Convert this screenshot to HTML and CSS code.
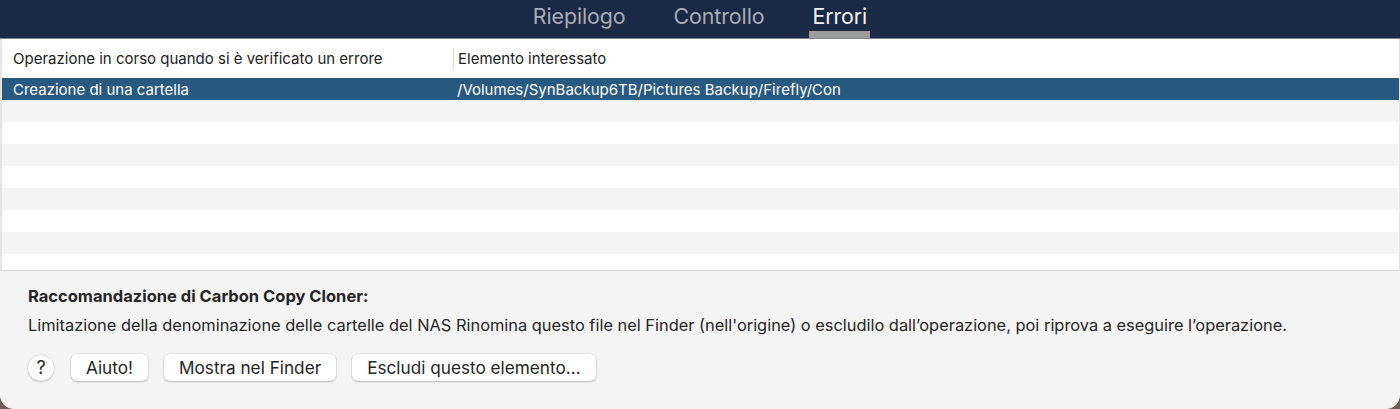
FILE: index.html
```html
<!doctype html>
<html lang="it">
<head>
<meta charset="utf-8">
<title>Errori</title>
<link rel="stylesheet" href="styles.css">
</head>
<body>

	<div class="window">

		<div class="tabbar">
			<span class="tab">Riepilogo</span>
			<span class="tab">Controllo</span>
			<span class="tab active">Errori</span>
		</div>

		<div class="table">
			<div class="thead">
				<div class="col first">Operazione in corso quando si è verificato un errore</div>
				<div class="col second">Elemento interessato</div>
			</div>
			<div class="tbody">
				<div class="row selected">
					<div class="col first">Creazione di una cartella</div>
					<div class="col second">/Volumes/SynBackup6TB/Pictures Backup/Firefly/Con</div>
				</div>
				<div class="row"></div>
				<div class="row"></div>
				<div class="row"></div>
				<div class="row"></div>
				<div class="row"></div>
				<div class="row"></div>
				<div class="row"></div>
				<div class="row"></div>
			</div>
		</div>

		<div class="advice">
			<h2>Raccomandazione di Carbon Copy Cloner:</h2>
			<p>Limitazione della denominazione delle cartelle del NAS Rinomina questo file nel Finder (nell'origine) o escludilo dall’operazione, poi riprova a eseguire l’operazione.</p>
			<div class="buttons">
				<button class="help">?</button>
				<button>Aiuto!</button>
				<button>Mostra nel Finder</button>
				<button>Escludi questo elemento…</button>
			</div>
		</div>

	</div>

</body>
</html>
```

FILE: styles.css
```css
body { background: #6e5d58; font-family: Inter, "Noto Sans", sans-serif; margin: 0; overflow: hidden; }

.window { background: #f4f4f4; border-radius: 0 0 14px 14px; height: 409px; overflow: hidden; }

.tabbar { background: #1a2a44; border-bottom: 1px solid #7d8593; display: flex; gap: 42px; height: 38px; justify-content: center; }
.tab { box-sizing: border-box; color: #a7adb6; font-size: 21.4px; height: 38px; letter-spacing: -0.1px; padding: 3px 3px 0; }
.tab.active { border-bottom: 7px solid #9c9c9c; color: #f2f4f7; }

.table { background: #fff; border-bottom: 1px solid #d6d6d6; border-left: 2px solid #e3e3e3; border-right: 1px solid #e3e3e3; }
.thead { align-items: center; display: flex; font-size: 15px; height: 39px; color: #222; }
.thead .second { border-left: 1px solid #dcdcdc; line-height: 22px; }

.col { box-sizing: border-box; white-space: nowrap; }
.col.first { padding-left: 11px; width: 451px; }
.col.second { padding-left: 4px; }

.tbody { height: 192px; overflow: hidden; }
.row { display: flex; align-items: center; font-size: 15px; height: 22px; }
.row:nth-child(even) { background: #f4f4f4; }
.row.selected { background: #285981; color: #fff; }

.advice { color: #262626; padding: 15px 28px 0; }
.advice h2 { font-size: 16.5px; font-weight: 700; margin: 0 0 9px; }
.advice p { font-size: 16.4px; margin: 0 0 19px; white-space: nowrap; }

.buttons { align-items: center; display: flex; gap: 16px; }
button { background: #fff; border: none; border-radius: 6px; box-shadow: 0 0 0 0.5px rgba(0,0,0,0.12), 0 1px 2px rgba(0,0,0,0.2); color: #262626; font: 17.2px Inter, "Noto Sans", sans-serif; height: 27px; padding: 0 15px; }
button.help { border-radius: 50%; font-size: 18px; height: 26px; margin-right: 1px; padding: 0; width: 26px; }
```
